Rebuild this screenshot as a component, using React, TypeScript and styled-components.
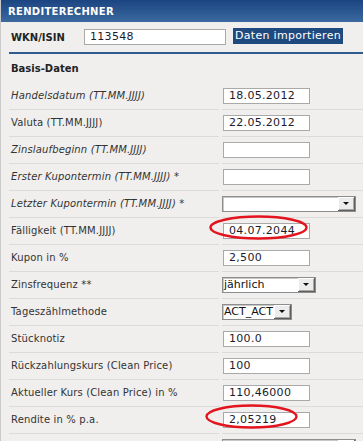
import React from "react";
import styled, { createGlobalStyle, css } from "styled-components";

const GlobalStyle = createGlobalStyle`
  html, body { margin: 0; padding: 0; background: #f0efed; }
  body { font-family: "DejaVu Sans", Verdana, sans-serif; }
`;

const Panel = styled.div`
  width: 363px;
  height: 441px;
  overflow: hidden;
  background: #f0efed;
  border-left: 1px solid #c9c9c9;
  box-sizing: border-box;
`;

const Header = styled.div`
  height: 22px;
  display: flex;
  align-items: center;
  padding-left: 8px;
  background: linear-gradient(#1b4581, #3c699f);
  color: #ffffff;
  font-weight: bold;
  font-size: 10px;
  letter-spacing: 0.3px;
  margin-left: -1px;
`;

const IsinRow = styled.div`
  display: flex;
  align-items: center;
  height: 29px;
  padding-left: 10px;
`;

const IsinLabel = styled.div`
  width: 73px;
  font-weight: bold;
  font-size: 10px;
  color: #222;
  padding-top: 1px;
`;

const TextBox = styled.div<{ $w: number }>`
  box-sizing: border-box;
  width: ${(p) => p.$w}px;
  height: 16px;
  background: #fff;
  border: 1px solid #a9a9a9;
  font-size: 11px;
  line-height: 14px;
  color: #1c1c2c;
  padding-left: 5px;
  letter-spacing: 0.3px;
  white-space: nowrap;
`;

const ImportButton = styled.div`
  margin-left: 7px;
  height: 16px;
  padding: 0 2px;
  background: #1f4a80;
  color: #ffffff;
  font-size: 11px;
  line-height: 15px;
  letter-spacing: 0.3px;
  margin-top: -1px;
`;

const Rule = styled.div`
  height: 2px;
  margin: 1px 0 0 8px;
  background: #2f5b8f;
`;

const SectionTitle = styled.div`
  height: 28px;
  display: flex;
  align-items: center;
  padding-left: 10px;
  padding-bottom: 1px;
  font-weight: bold;
  font-size: 10px;
  color: #222;
`;

const FieldTable = styled.div`
  display: flex;
  flex-direction: column;
  padding-left: 8px;
`;

const FieldRow = styled.div`
  display: grid;
  grid-template-columns: 210px 1fr;
  column-gap: 3px;
`;

const cellBase = css`
  height: 26px;
  border-bottom: 1px solid #dbdbd9;
  display: flex;
  align-items: center;
`;

const LabelCell = styled.div<{ $italic?: boolean }>`
  ${cellBase};
  box-sizing: content-box;
  height: 24px;
  padding: 0 0 2px 2px;
  font-size: 10px;
  letter-spacing: 0.15px;
  color: #333;
  font-style: ${(p) => (p.$italic ? "italic" : "normal")};
  white-space: nowrap;
`;

const ValueCell = styled.div`
  ${cellBase};
  position: relative;
`;

const FieldInput = styled(TextBox)`
  margin-left: 1px;
`;

const SelectBox = styled.div<{ $w: number }>`
  box-sizing: border-box;
  width: ${(p) => p.$w}px;
  height: 16px;
  display: flex;
  background: #fff;
  border: 1px solid #8d8d8d;
  box-shadow: inset 1px 1px 0 #c8c8c8;
`;

const SelectText = styled.div`
  flex: 1;
  font-size: 11px;
  line-height: 14px;
  color: #111;
  padding-left: 1px;
  white-space: nowrap;
  overflow: hidden;
`;

const ArrowButton = styled.div`
  width: 17px;
  height: 14px;
  box-sizing: border-box;
  background: #ececec;
  border-right: 1px solid #5e5e5e;
  border-bottom: 1px solid #5e5e5e;
  box-shadow: inset 1px 1px 0 #ffffff, inset -1px -1px 0 #a8a8a8;
  display: flex;
  align-items: center;
  justify-content: center;
`;

const Arrow = styled.div`
  width: 0;
  height: 0;
  border-left: 3px solid transparent;
  border-right: 3px solid transparent;
  border-top: 3px solid #111;
`;

const Mark = styled.svg`
  position: absolute;
  top: -3px;
  pointer-events: none;
`;

type Field = {
  label: string;
  italic?: boolean;
  kind: "input" | "select";
  value?: string;
  width?: number;
  mark?: { left: number; width: number };
};

const fields: Field[] = [
  { label: "Handelsdatum (TT.MM.JJJJ)", italic: true, kind: "input", value: "18.05.2012" },
  { label: "Valuta (TT.MM.JJJJ)", kind: "input", value: "22.05.2012" },
  { label: "Zinslaufbeginn (TT.MM.JJJJ)", italic: true, kind: "input", value: "" },
  { label: "Erster Kupontermin (TT.MM.JJJJ) *", italic: true, kind: "input", value: "" },
  { label: "Letzter Kupontermin (TT.MM.JJJJ) *", italic: true, kind: "select", value: "", width: 134 },
  { label: "Fälligkeit (TT.MM.JJJJ)", kind: "input", value: "04.07.2044", mark: { left: -13, width: 99 } },
  { label: "Kupon in %", kind: "input", value: "2,500" },
  { label: "Zinsfrequenz **", kind: "select", value: "jährlich", width: 94 },
  { label: "Tageszählmethode", kind: "select", value: "ACT_ACT", width: 70 },
  { label: "Stücknotiz", kind: "input", value: "100.0" },
  { label: "Rückzahlungskurs (Clean Price)", kind: "input", value: "100" },
  { label: "Aktueller Kurs (Clean Price) in %", kind: "input", value: "110,46000" },
  { label: "Rendite in % p.a.", kind: "input", value: "2,05219", mark: { left: -17, width: 93 } },
  { label: "", kind: "select", value: "", width: 134 },
];

function Ellipse({ left, width }: { left: number; width: number }) {
  const h = 25;
  return (
    <Mark width={width} height={h} style={{ left }} viewBox={`0 0 ${width} ${h}`}>
      <ellipse
        cx={width / 2}
        cy={h / 2}
        rx={width / 2 - 1.5}
        ry={h / 2 - 1.5}
        fill="none"
        stroke="#e3141e"
        strokeWidth={2.4}
      />
    </Mark>
  );
}

export default function App() {
  return (
    <>
      <GlobalStyle />
      <Panel>
        <Header>RENDITERECHNER</Header>
        <IsinRow>
          <IsinLabel>WKN/ISIN</IsinLabel>
          <TextBox $w={142}>113548</TextBox>
          <ImportButton>Daten importieren</ImportButton>
        </IsinRow>
        <Rule />
        <SectionTitle>Basis-Daten</SectionTitle>
        <FieldTable>
          {fields.map((f, i) => (
            <FieldRow key={i}>
              <LabelCell $italic={f.italic}>{f.label}</LabelCell>
              <ValueCell>
                {f.kind === "input" ? (
                  <FieldInput $w={87}>{f.value}</FieldInput>
                ) : (
                  <SelectBox $w={f.width ?? 94}>
                    <SelectText>{f.value}</SelectText>
                    <ArrowButton>
                      <Arrow />
                    </ArrowButton>
                  </SelectBox>
                )}
                {f.mark && <Ellipse left={f.mark.left} width={f.mark.width} />}
              </ValueCell>
            </FieldRow>
          ))}
        </FieldTable>
      </Panel>
    </>
  );
}
